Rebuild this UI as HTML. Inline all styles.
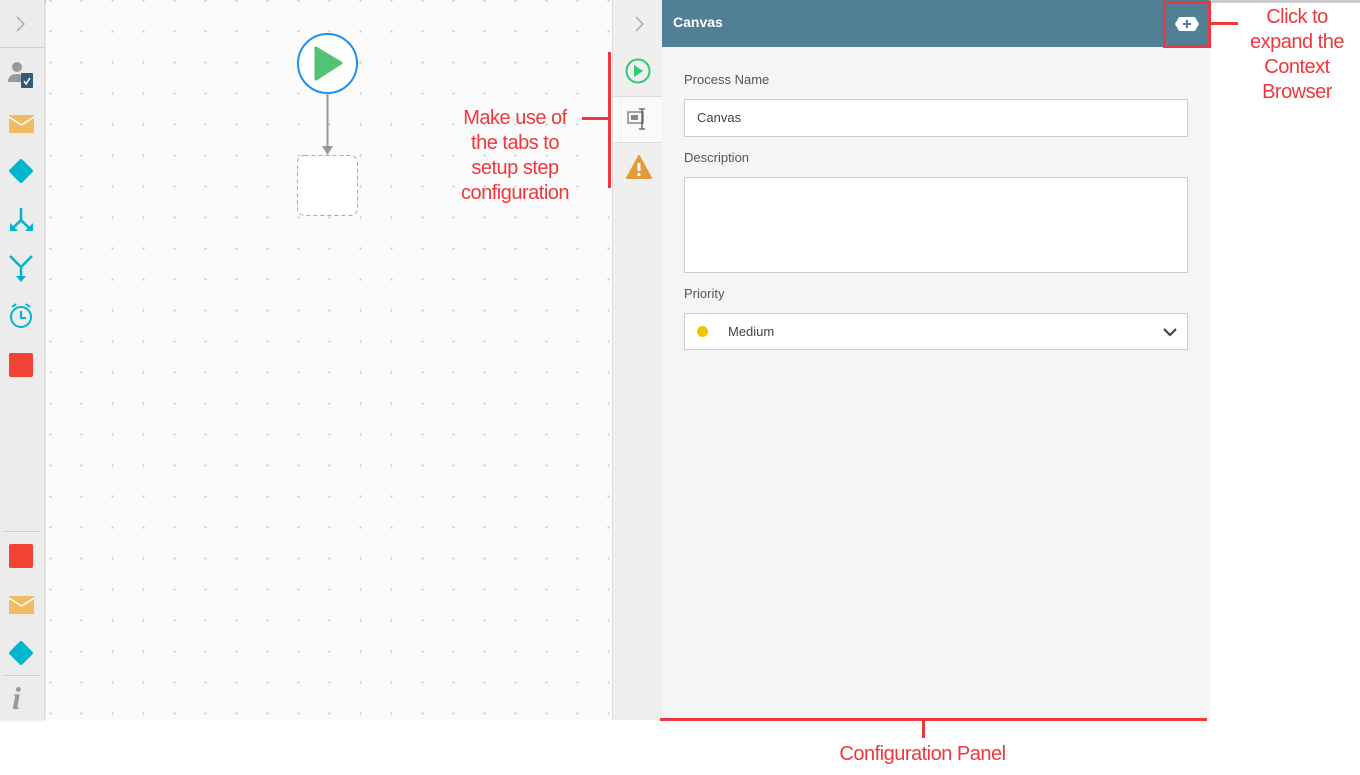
<!DOCTYPE html>
<html><head><meta charset="utf-8"><style>
*{margin:0;padding:0;box-sizing:border-box}
body{width:1360px;height:775px;background:#fff;position:relative;overflow:hidden;font-family:"Liberation Sans",sans-serif}
.abs{position:absolute}
#left{left:0;top:0;width:45px;height:720px;background:#ececec;border-right:1px solid #ddd;box-shadow:1px 0 3px rgba(0,0,0,.15)}
#canvas{left:46px;top:0;width:566px;height:720px;background-color:#fbfbfb;background-image:radial-gradient(circle,#c4c4c4 0.8px,transparent 1.2px);background-size:31px 31px;background-position:-11px 16px}
#tabs{left:612px;top:0;width:50px;height:720px;background:#efefef;border-left:1px solid #ddd}
#panel{left:662px;top:0;width:548px;height:720px;background:#f5f5f5}
#hdr{left:0;top:0;width:548px;height:47px;background:#517f96;color:#fff;font-size:14px;font-weight:bold;padding:14px 11px}
.lbl{position:absolute;left:22px;font-size:13px;color:#555}
.inp{position:absolute;left:22px;width:504px;background:#fff;border:1px solid #ccc;font-size:13px;color:#444;padding-left:12px}
.red{color:#f0373c;font-size:20px;text-align:center;line-height:25px;letter-spacing:-0.5px}
</style></head><body>
<div class="abs" style="left:0;top:0;width:1360px;height:3px;background:#ccc"></div>
<div id="left" class="abs">
<svg class="abs" style="left:15px;top:15px" width="12" height="18"><path d="M2 2l7 7-7 7" stroke="#aaa" stroke-width="1.5" fill="none"/></svg>
<div style="position:absolute;top:47px;left:0;width:45px;height:1px;background:#ccc"></div>
<svg class="abs" style="left:8px;top:60px" width="28" height="30"><circle cx="9" cy="7" r="5" fill="#999"/><path d="M0 22 q0-8 9-8 q5 0 8 3 v5z" fill="#999"/><rect x="13" y="13" width="12" height="15" rx="1" fill="#2f5a78"/><path d="M16 21l2 3 4-6" stroke="#fff" stroke-width="1.5" fill="none"/></svg>
<div class="abs" style="left:9px;top:115px;width:25px;height:18px;background:#efbb63"></div>
<svg class="abs" style="left:9px;top:115px" width="25" height="18"><path d="M0 2l12.5 8 12.5-8" stroke="#fff" stroke-width="1.5" fill="none"/></svg>
<div class="abs" style="left:12px;top:162px;width:18px;height:18px;background:#00b5cc;transform:rotate(45deg);border-radius:2px"></div>
<svg class="abs" style="left:8px;top:206px" width="28" height="28"><path d="M13 2v12l-9 9M13 14l9 9" stroke="#00b5cc" stroke-width="2.5" fill="none"/><path d="M2 17v8h8zM25 17v8h-8z" fill="#00b5cc"/></svg>
<svg class="abs" style="left:8px;top:254px" width="28" height="30"><path d="M2 2l11 11 11-11M13 13v12" stroke="#00b5cc" stroke-width="2.5" fill="none"/><path d="M8 22h10l-5 6z" fill="#00b5cc"/></svg>
<svg class="abs" style="left:8px;top:302px" width="28" height="28"><circle cx="13" cy="15" r="10" stroke="#00b5cc" stroke-width="2" fill="none"/><path d="M13 9v7h5M4 5l4-3M22 5l-4-3" stroke="#00b5cc" stroke-width="2" fill="none"/></svg>
<div class="abs" style="left:9px;top:353px;width:24px;height:24px;background:#f24236;border-radius:2px"></div>
<div class="abs" style="left:3px;top:531px;width:37px;height:1px;background:#ccc"></div>
<div class="abs" style="left:9px;top:544px;width:24px;height:24px;background:#f24236;border-radius:2px"></div>
<div class="abs" style="left:9px;top:596px;width:25px;height:18px;background:#efbb63"></div>
<svg class="abs" style="left:9px;top:596px" width="25" height="18"><path d="M0 2l12.5 8 12.5-8" stroke="#fff" stroke-width="1.5" fill="none"/></svg>
<div class="abs" style="left:12px;top:644px;width:18px;height:18px;background:#00b5cc;transform:rotate(45deg);border-radius:2px"></div>
<div class="abs" style="left:3px;top:675px;width:37px;height:1px;background:#ccc"></div>
<div class="abs" style="left:12px;top:680px;font-family:'Liberation Serif',serif;font-style:italic;font-weight:bold;font-size:32px;color:#999">i</div>
</div>
<div id="canvas" class="abs"></div>
<svg class="abs" style="left:296px;top:32px" width="64" height="190"><circle cx="31.5" cy="31.5" r="29.5" fill="#fff" stroke="#1e8ff0" stroke-width="2"/><path d="M20 16 L45 31 L20 47 Z" fill="#52c274" stroke="#52c274" stroke-width="3" stroke-linejoin="round"/><path d="M31.5 61v56" stroke="#999" stroke-width="2"/><path d="M26 114h11l-5.5 9z" fill="#999"/><rect x="1.5" y="123.5" width="60" height="60" rx="7" fill="#fff" stroke="#aaa" stroke-dasharray="4 3"/></svg>
<div id="tabs" class="abs">
<svg class="abs" style="left:21px;top:15px" width="12" height="18"><path d="M2 2l7 7-7 7" stroke="#aaa" stroke-width="1.5" fill="none"/></svg>
<svg class="abs" style="left:12px;top:58px" width="26" height="26"><circle cx="13" cy="13" r="11.5" fill="none" stroke="#2ecc71" stroke-width="2"/><path d="M9 7l9 6-9 6z" fill="#2ecc71"/></svg>
<div class="abs" style="left:0;top:96px;width:50px;height:47px;background:#fafafa;border-top:1px solid #ddd;border-bottom:1px solid #ddd"></div>
<svg class="abs" style="left:14px;top:108px" width="26" height="22"><rect x="1" y="4" width="15" height="11" fill="none" stroke="#888" stroke-width="1.5"/><rect x="4" y="7" width="7" height="5" fill="#888"/><path d="M15 1v20M12 1h6M12 21h6" stroke="#555" stroke-width="1.3"/></svg>
<svg class="abs" style="left:13px;top:155px" width="26" height="24"><path d="M13 1L25 23H1Z" fill="#e39a3b" stroke="#e39a3b" stroke-linejoin="round" stroke-width="2"/><path d="M13 8v8" stroke="#fff" stroke-width="3"/><circle cx="13" cy="19.5" r="1.6" fill="#fff"/></svg>
</div>
<div id="panel" class="abs">
<div id="hdr" class="abs">Canvas</div>
<div class="lbl" style="top:72px">Process Name</div>
<div class="inp" style="top:99px;height:38px;line-height:36px">Canvas</div>
<div class="lbl" style="top:150px">Description</div>
<div class="inp" style="top:177px;height:96px"></div>
<div class="lbl" style="top:286px">Priority</div>
<div class="inp" style="top:313px;height:37px;line-height:35px;padding-left:43px">Medium</div>
<div class="abs" style="left:35px;top:326px;width:11px;height:11px;border-radius:50%;background:#f5c400"></div>
<svg class="abs" style="left:500px;top:327px" width="16" height="10"><path d="M2 2l6 6 6-6" stroke="#444" stroke-width="2.2" fill="none"/></svg>
</div>
<div class="abs" style="left:1163px;top:1px;width:48px;height:47px;border:3px solid #f0373c"></div>
<svg class="abs" style="left:1174px;top:16px" width="26" height="16"><path d="M5 1h16l4 7-4 7H5L1 8z" fill="#fff"/><path d="M13 4v8M9 8h8" stroke="#517f96" stroke-width="2"/></svg>
<div class="abs" style="left:1211px;top:22px;width:27px;height:3px;background:#f0373c"></div>
<div class="abs red" style="left:1238px;top:5px;width:118px">Click to<br>expand the<br>Context<br>Browser</div>
<div class="abs" style="left:608px;top:52px;width:3px;height:136px;background:#f0373c"></div>
<div class="abs" style="left:582px;top:117px;width:27px;height:3px;background:#f0373c"></div>
<div class="abs red" style="left:440px;top:106px;width:150px">Make use of<br>the tabs to<br>setup step<br>configuration</div>
<div class="abs" style="left:660px;top:718px;width:547px;height:3px;background:#f0373c"></div>
<div class="abs" style="left:922px;top:720px;width:3px;height:18px;background:#f0373c"></div>
<div class="abs red" style="left:800px;top:742px;width:245px">Configuration Panel</div>
</body></html>
